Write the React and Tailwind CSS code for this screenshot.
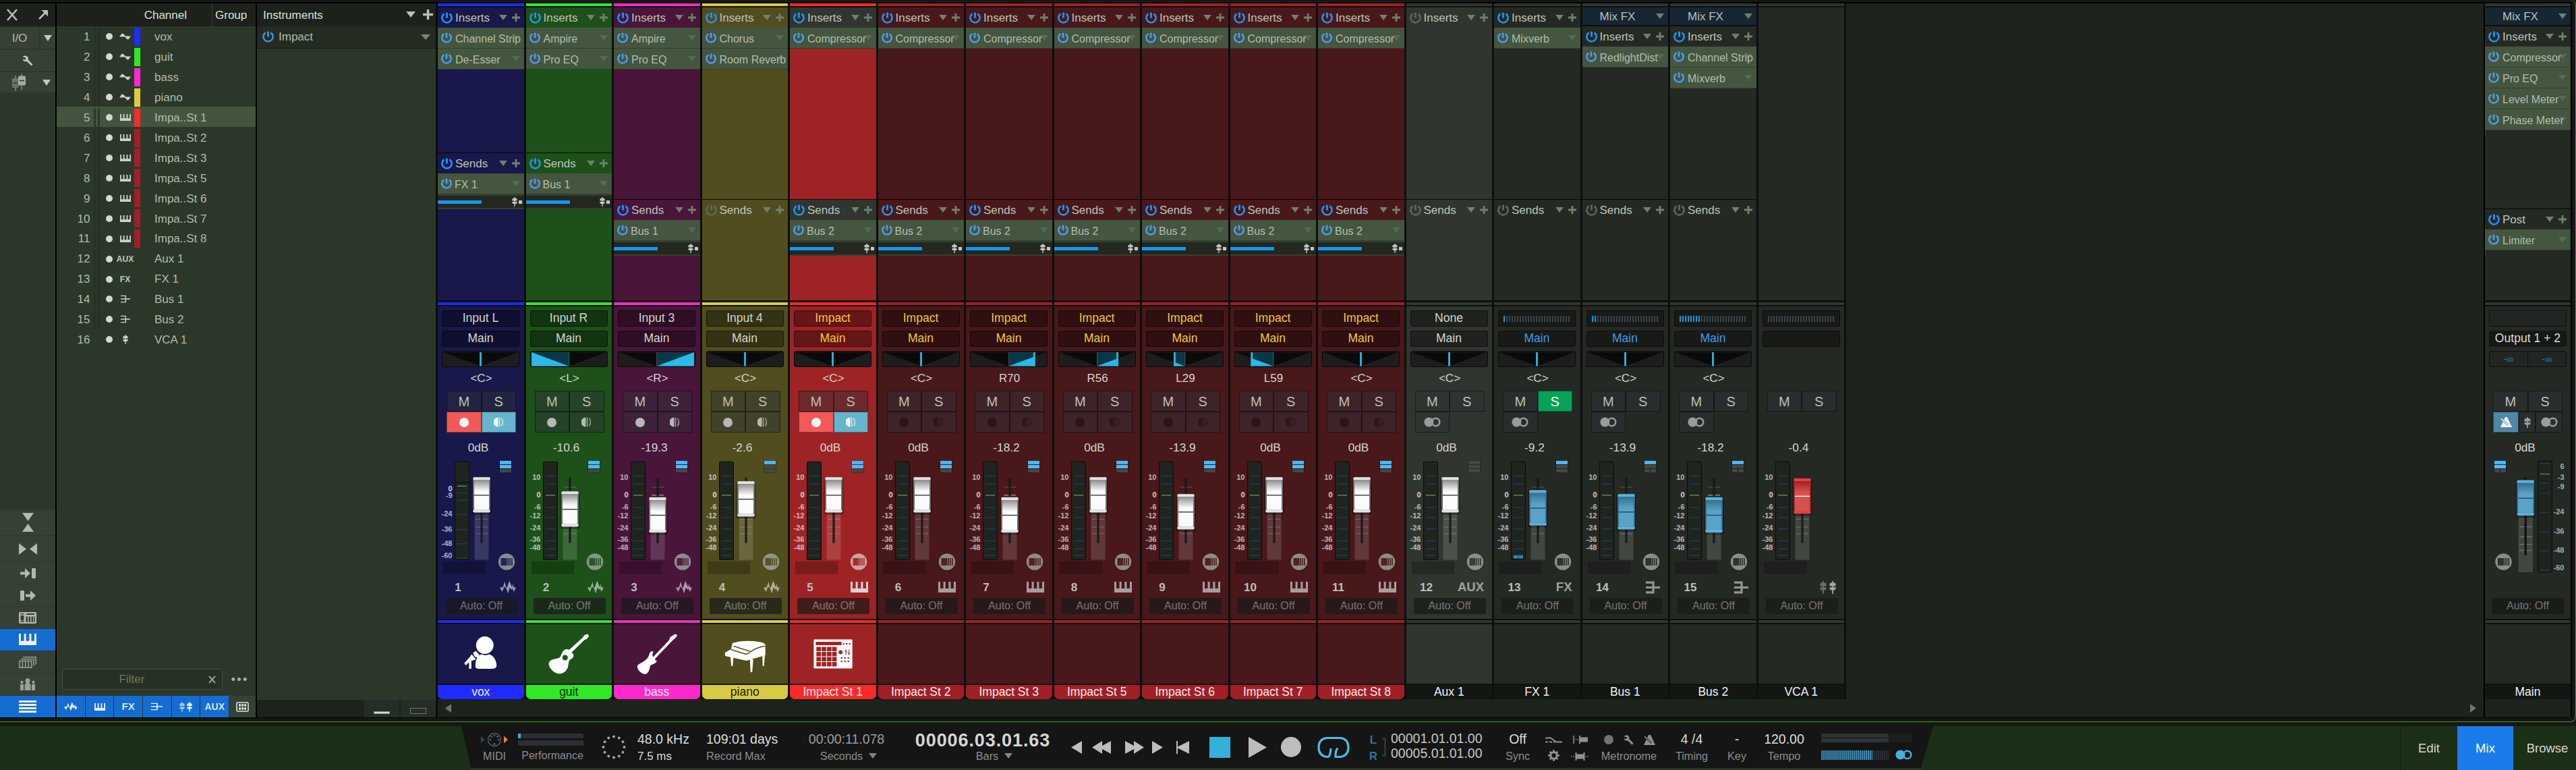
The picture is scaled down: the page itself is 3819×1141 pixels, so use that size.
import React from "react";

/* ---------- small glyphs ---------- */

function Power({ size = 17, color = "#2095f5" }) {
  return (
    <svg width={size} height={size} viewBox="0 0 17 17" className="shrink-0">
      <path d="M4.6 2.4A7.1 7.1 0 1 0 12.4 2.4" fill="none" stroke={color} strokeWidth="2.6" />
      <path d="M8.5 0.6v8" stroke={color} strokeWidth="2.8" />
    </svg>
  );
}

function Down({ w = 12, h = 8, color = "#70816d" }) {
  return (
    <svg width={w} height={h} viewBox="0 0 12 8" preserveAspectRatio="none" className="shrink-0">
      <path d="M0 0h12L6 8z" fill={color} />
    </svg>
  );
}

function Plus({ size = 12, color = "#70816d" }) {
  return (
    <svg width={size} height={size} viewBox="0 0 12 12" className="shrink-0">
      <path d="M6 0v12M0 6h12" stroke={color} strokeWidth="2.8" />
    </svg>
  );
}

function Sine() {
  return (
    <svg width="17" height="10" viewBox="0 0 17 10">
      <path d="M0 5.4C1.5 5 2.5 0.6 4.2 0.6S8 3 9.2 4.6H17C15.5 5.6 14.4 9.6 12.8 9.6S9.6 6.8 8 5.4z" fill="#ccd2ca" />
    </svg>
  );
}

function Keys({ w = 16, h = 10, color = "#ccd2ca" }) {
  return (
    <svg width={w} height={h} viewBox="0 0 26 16" preserveAspectRatio="none">
      <path
        d="M0 0h3v10h4.6V0h3v10h4.800V0h3v10H23V0h3v16H0z"
        fill={color}
      />
    </svg>
  );
}

function BusIcon({ w = 14, h = 12, color = "#ccd2ca", sw = 2 }) {
  return (
    <svg width={w} height={h} viewBox="0 0 20 18" preserveAspectRatio="none">
      <path d="M0 2h10.5v14H0M0 9h20" fill="none" stroke={color} strokeWidth={sw} />
    </svg>
  );
}

function FaderGlyph({ w = 8, h = 14, color = "#ccd2ca" }) {
  return (
    <svg width={w} height={h} viewBox="0 0 8 14" preserveAspectRatio="none">
      <path d="M4 0v14" stroke={color} strokeWidth="1.4" />
      <path d="M1.6 1.8h4.8L7.6 3v2.6H.4V3zM.4 6.9h7.2v1.8L6.4 10H1.6L.4 8.7z" fill={color} />
    </svg>
  );
}

function Wave({ w = 24, h = 20, color = "#b0b4b8" }) {
  return (
    <svg width={w} height={h} viewBox="0 0 24 20" preserveAspectRatio="none">
      <path
        d="M0 10.5h4.4L7.4 2l1.8 8.5h1.6L14.2.6l4 9.9 1-5.4 1.6 5.4H24L20.8 17l-2.4-5.6-1 2.6-2.6-3.4L12 19.4 9.4 11 7.8 11l-.8-2.4L3.4 17z"
        fill={color}
      />
    </svg>
  );
}

function Rings({ w = 25, h = 15, color = "#9a9d98" }) {
  return (
    <svg width={w} height={h} viewBox="0 0 25 15">
      <circle cx="7.4" cy="7.5" r="7" fill={color} />
      <circle cx="17.6" cy="7.5" r="5.7" fill="none" stroke={color} strokeWidth="2.4" />
    </svg>
  );
}

function Wrench({ size = 16, color = "#c0c5bd" }) {
  return (
    <svg width={size} height={size} viewBox="0 0 16 16">
      <path
        d="M.6 2.6A4.6 4.6 0 0 1 4.4.4 4.6 4.6 0 0 1 8.8 6.4L15.6 13.4 13.4 15.6 6.6 8.8A4.6 4.6 0 0 1 .4 5.8L3.4 6.4 5.4 5.4 5.2 3.4z"
        fill={color}
      />
    </svg>
  );
}

function Metronome({ w = 17, h = 15, color = "#8f918f", back = "#151515" }) {
  return (
    <svg width={w} height={h} viewBox="0 0 17 15" preserveAspectRatio="none">
      <path d="M7 0h3l7 15H0z" fill={color} />
      <path d="M1 2.4 11.5 12" stroke={back} strokeWidth="3" />
      <path d="M1 2.4 11.5 12" stroke={color} strokeWidth="1.5" />
    </svg>
  );
}

/* ---------- insert / send rack ---------- */

function RackHeader({ label, on = true, bg = "" }) {
  return (
    <div className={`flex h-[30px] items-center pr-[6px] pl-[5px] ${bg}`}>
      <Power color={on ? "#2095f5" : "#5f675c"} />
      <span className="ml-[4px] flex-1 pt-[1px] text-[17px] leading-none text-[#bdc5b8]">{label}</span>
      <Down />
      <span className="ml-[7px] flex">
        <Plus />
      </span>
    </div>
  );
}

function RackItem({ label, send }) {
  return (
    <div className="flex h-[31px] items-center border-b border-[#33402f] bg-[#44563f] pr-[6px] pl-[5px]">
      <Power size={16} color="#4f9df0" />
      <span
        className={`z-10 w-0 flex-1 pt-[3px] whitespace-nowrap text-[16px] leading-none text-[#b2beac] ${send ? "ml-[4px]" : "ml-[5px]"}`}
      >
        {label}
      </span>
      <Down color="#576a52" />
    </div>
  );
}

function SendLevel() {
  return (
    <div className="flex h-[22px] items-center border-y-2 border-[#34402f] bg-[#232720] pr-[3px]">
      <div className="h-[5px] w-[65px] bg-[#1496f5]" />
      <div className="ml-auto flex items-center gap-[2px]">
        <FaderGlyph color="#c2c8c0" />
        <div className="h-[5px] w-[5px] bg-[#c2c8c0]" />
      </div>
    </div>
  );
}

function MixFx() {
  return (
    <div className="flex h-[28px] items-center border-b-2 border-[#0b0e0b] bg-[#162733] pr-[6px] pl-[26px]">
      <span className="flex-1 text-[17px] leading-none text-[#b9c2b8]">Mix FX</span>
      <Down />
    </div>
  );
}

function Rack({ s }) {
  const headBg = s.key === "i1" ? "bg-[#30352f]" : "";
  return (
    <div className="flex h-[434px] flex-col" style={{ backgroundColor: s.bg }}>
      {!s.vca && (
        <>
          <div className={s.highSends ? "h-[215px]" : "h-[284px]"}>
            {s.mixfx && <MixFx />}
            <RackHeader label="Inserts" on={!s.insertsOff} bg={headBg} />
            {s.inserts.map((n) => (
              <RackItem key={n} label={n} />
            ))}
          </div>
          <div className="h-px bg-black/80" />
          <RackHeader label="Sends" on={!!s.send} bg={headBg} />
          {s.send && (
            <>
              <RackItem label={s.send} send />
              <SendLevel />
            </>
          )}
        </>
      )}
    </div>
  );
}

/* ---------- strip body ---------- */

function Pan({ v }) {
  const x = 57.5 + 55.5 * v;
  const side = v < 0 ? -1 : 1;
  const a = Math.abs(v);
  return (
    <svg width="115" height="24" viewBox="0 0 115 24" className="block">
      <rect x="0.5" y="0.5" width="114" height="23" rx="2.5" fill="#1d1d1d" stroke="#090a09" />
      <path d="M2 2h111L57.5 22.5z" fill="#0a0a0a" />
      {a > 0 && (
        <>
          <rect x={Math.min(57.5, x)} y="2" width={Math.abs(x - 57.5)} height="20.5" fill="#083848" />
          <path d={`M57.5 22.5L${x} ${22.5 - 20.5 * a}V22.5z`} fill="#2ab9e9" />
          <rect x="57" y="2" width="1.4" height="20.5" fill="#3a4a4c" />
        </>
      )}
      {a < 1 && <rect x={x - 1.4 - (a ? side : 0)} y="2" width="2.8" height="20.5" fill="#2ab9e9" />}
    </svg>
  );
}

function Slot({ children, color = "text-[#d3d6d0]" }) {
  return (
    <div
      className={`flex h-[24px] w-[115px] items-center justify-center rounded-[3px] border border-black/50 bg-black/35 text-[17.5px] leading-none whitespace-nowrap ${color}`}
    >
      {children}
    </div>
  );
}

function LevelTicks({ on }) {
  return (
    <svg width="99" height="9" viewBox="0 0 99 9">
      {Array.from({ length: 25 }, (_, i) => (
        <rect key={i} x={i * 4} y="0" width="2" height="9" fill={i < on ? "#1b97dc" : "#3a4448"} />
      ))}
    </svg>
  );
}

const stdLabels = [["10", 31], ["0", 57.3], ["-6", 75.3], ["-12", 88.3], ["-24", 106.2], ["-36", 123.2], ["-48", 135.2]];
const stdTicks = [29.3, 41.2, 57.8, 76, 90.6, 107.6, 125.4, 137.3, 146.8];
const voxLabels = [["0", 47.7], ["-9", 58], ["-24", 85.2], ["-36", 108.2], ["-48", 129.2], ["-60", 147.2]];
const voxTicks = [44.3, 54.6, 65.3, 86.3, 108.8, 129.8, 151];

function Cap({ x, y, kind }) {
  const c = {
    white: ["#8f8f8f", "#fbfbfb", "#e4e4e4", "#6e6e6e", "#3a3a3a"],
    blue: ["#356f8d", "#5aa3c8", "#5fb0d8", "#2f6c8c", "#24465a"],
    red: ["#a51f22", "#d65050", "#e04242", "#a02020", "#ffffff"],
  }[kind];
  const id = `cap-${kind}`;
  return (
    <g>
      <defs>
        <linearGradient id={id} x1="0" y1="0" x2="0" y2="1">
          <stop offset="0" stopColor={c[0]} />
          <stop offset="0.38" stopColor={c[1]} />
          <stop offset="1" stopColor={c[1]} />
        </linearGradient>
      </defs>
      <rect x={x - 14.5} y={y - 26} width="29" height="55" rx="4" fill="#000" opacity="0.35" />
      <rect x={x - 13} y={y - 27} width="26" height="53" rx="2.5" fill={c[3]} />
      <rect x={x - 12.5} y={y - 26.5} width="25" height="4" rx="1.5" fill={c[2]} />
      <rect x={x - 12.5} y={y + 21.5} width="25" height="4" rx="1.5" fill={c[2]} />
      <rect x={x - 11} y={y - 22.5} width="22" height="44" rx="1.5" fill={`url(#${id})`} />
      <rect x={x - 11} y={y - 0.7} width="22" height="1.4" fill={c[4]} />
    </g>
  );
}

function ScaleIcon({ x, on, split }) {
  return (
    <g>
      <rect x={x} y="6" width="19" height="19" fill="#000" opacity="0.25" />
      {[0, 1, 2].map((i) => (
        <rect key={i} x={x + 1} y={6.8 + i * 6.1} width="17" height="5.1" fill={i < on ? "#4fb9f0" : "#454745"} />
      ))}
      {split && <rect x={x + 8.7} y="19" width="1.4" height="5.2" fill="#222" />}
    </g>
  );
}

function PianoBadge({ cx, color = "#a3a7a3", bg }) {
  return (
    <g>
      <circle cx={cx} cy="156.5" r="12.2" fill={color} opacity="0.8" />
      <rect x={cx - 8.5} y="151" width="9" height="11" fill={bg} opacity="0.9" />
      <path d={`M${cx + 2.2} 151v11M${cx + 5} 151v11M${cx + 7.9} 151v11`} stroke={bg} strokeWidth="1.6" />
    </g>
  );
}

function Fader({ s }) {
  const labels = s.key === "vox" ? voxLabels : stdLabels;
  const ticks = s.key === "vox" ? voxTicks : stdTicks;
  const zero = s.key === "vox" ? 44.3 : 57.8;
  return (
    <svg width="128" height="180" viewBox="0 0 128 180" className="block">
      {labels.map(([t, y]) => (
        <text
          key={t}
          x="21.5"
          y={y + 3.9}
          textAnchor="end"
          fontSize="11"
          fontWeight="700"
          fill="#ffffff"
          opacity={t === "0" ? 0.8 : 0.65}
          fontFamily="'Liberation Sans', Arial, sans-serif"
        >
          {t}
        </text>
      ))}
      <rect x="25.5" y="8.3" width="21" height="145" rx="1.5" fill="#1f241e" stroke="#0a0d0a" />
      {s.key === "vox" && <rect x="26" y="38.6" width="20" height="1.2" fill="#0a0d0a" />}
      {ticks.map((y) => (
        <rect key={y} x="29" y={y - 0.8} width="14" height="1.6" fill={y === zero ? "#617a55" : "#1c3d55"} />
      ))}
      {s.key === "fx" && (
        <>
          <rect x="29" y="147" width="6.5" height="4.5" fill="#2f86c0" />
          <rect x="36.3" y="147" width="6.5" height="4.5" fill="#2f86c0" />
        </>
      )}
      <rect x="54.5" y={s.cap} width="21" height={153.5 - s.cap} rx="1.5" fill="#fff" opacity="0.14" />
      {[46, 57.8, 93.4, 105, 114.7].map((y, i) => (
        <rect key={y} x="56" y={y - 0.6} width="18" height="1.2" fill={i === 1 ? "#cfe0b8" : "#fff"} opacity={i === 1 ? 0.7 : 0.2} />
      ))}
      <rect x="63.3" y="31.7" width="3.4" height="97" fill="#171a18" opacity="0.9" />
      <Cap x={65} y={s.cap} kind={s.capKind || "white"} />
      {!s.vca && <ScaleIcon x={91} on={s.scale} split={s.split} />}
      <rect x="8" y="156" width="63" height="18.5" fill="#000" opacity="0.22" stroke="#000" strokeOpacity="0.3" />
      {!s.vca && <PianoBadge cx={102} bg={s.bg} color={s.key === "i1" ? "#dcc0c0" : "#a3a7a3"} />}
    </svg>
  );
}

function Monitor({ color }) {
  return (
    <svg width="15" height="15" viewBox="0 0 15 15">
      <path d="M6.5.5a7 7 0 0 0 0 14z" fill={color} />
      <path d="M8.6.8v13.4M11.4 1.6q4 5.8 0 11.6" fill="none" stroke={color} strokeWidth="1.6" opacity="0.8" />
    </svg>
  );
}

const btn = "flex items-center justify-center bg-[#2e343a]/45 border border-black/45";

function Buttons({ s }) {
  const txt = `${btn} h-[31px] text-[20px] leading-none`;
  const glyph = s.armed ? "#f4f4f4" : s.dim ? "#2a1518" : "#b5b9b3";
  return (
    <div className="ml-[13px] grid w-[103px] grid-cols-2 rounded-[3px]">
      <div className={`${txt} text-[#bcc0ba]`}>M</div>
      <div className={`${txt} ${s.solo ? "text-white" : "text-[#bcc0ba]"}`} style={s.solo ? { backgroundColor: "#05a357" } : undefined}>
        S
      </div>
      {s.rec && (
        <>
          <div className={`${btn} h-[31px]`} style={s.armed ? { backgroundColor: "#f25959" } : undefined}>
            <div className="h-[14px] w-[14px] rounded-full" style={{ backgroundColor: glyph }} />
          </div>
          <div className={`${btn} h-[31px]`} style={s.armed ? { backgroundColor: "#65b5cc" } : undefined}>
            <Monitor color={glyph} />
          </div>
        </>
      )}
      {s.rings && (
        <div className={`${btn} h-[31px]`}>
          <Rings />
        </div>
      )}
    </div>
  );
}

function TypeIcon({ s }) {
  if (s.type === "wave") return <Wave color={s.icon} />;
  if (s.type === "keys") return <Keys w={26} h={16} color={s.icon} />;
  if (s.type === "bus") return <BusIcon w={21} h={19} color="#94968f" sw={3} />;
  if (s.type === "vca")
    return (
      <span className="flex items-center gap-[4px]">
        <FaderGlyph w={10} h={19} color="#6c706a" />
        <FaderGlyph w={10} h={19} color="#a5a8a2" />
      </span>
    );
  return <span className="text-[18.5px] leading-none font-bold text-[#a0a29c]">{s.type}</span>;
}

function Body({ s }) {
  return (
    <div className="flex h-[463px] flex-col pt-[6px]" style={{ backgroundColor: s.bg }}>
      <div className="ml-[6px] flex flex-col gap-[6px]">
        <Slot color={s.yellow ? "text-[#f0c83c]" : undefined}>
          {s.ticks !== undefined ? <LevelTicks on={s.ticks} /> : s.input}
        </Slot>
        <Slot color={s.yellow ? "text-[#f0c83c]" : s.blueOut ? "text-[#3d9bea]" : undefined}>{s.vca ? "" : "Main"}</Slot>
        {s.vca ? <div className="h-[24px]" /> : <Pan v={s.pan} />}
      </div>
      <div className="flex h-[35px] w-[129px] items-center justify-center pb-[3px] text-[17px] leading-none text-[#d3d6d0]">
        {s.panLabel}
      </div>
      <div className="h-[62px]">
        <Buttons s={s} />
      </div>
      <div className="mt-[11px] flex h-[24px] w-[120px] items-center justify-center text-[17.3px] leading-none text-[#d3d6d0]">
        {s.db}
      </div>
      <Fader s={s} />
      <div className="flex h-[28px] items-center pr-[12px]">
        <span className="w-[60px] text-center text-[17px] leading-none font-bold text-[#bcc1ba]">{s.num}</span>
        <span className="ml-auto flex">
          <TypeIcon s={s} />
        </span>
      </div>
      <div className="mt-[2px] ml-[11px] flex h-[24px] w-[107px] items-center justify-center rounded-[2px] bg-[#181a18]/70 text-[16px] leading-none text-white/40">
        Auto: Off
      </div>
    </div>
  );
}

/* ---------- instrument pictures ---------- */

function Singer() {
  return (
    <svg width="128" height="88" viewBox="0 0 128 88" fill="#fff">
      <ellipse cx="70" cy="31" rx="13" ry="13" />
      <path d="M56 62C56 52 60 45 66 44.5Q71 47.5 76 44.5C84 46 88 56 87.5 62Q87 65.500 82 66H61Q56 66 56 62z" />
      <path d="M52.500 42.500l4-3 5.500 5.500-2.500 4.500q-5 0-7-7z" />
      <path d="M50.500 44.500l6.500 7.500-7 2.500V66h-3.500V56.500L41.500 61 39.500 57.500 46.500 50z" />
    </svg>
  );
}

function Guitar({ hole }) {
  return (
    <svg width="128" height="88" viewBox="0 0 128 88" fill="#fff">
      <path d="M52 46C54 38 60 35 64 38L84 20 87 16 92 14.500 93.500 18 90 22 87 23 67.500 42C71 44 72 48 68 51 62 53 64 58 62 64 59 72 51 75 45 72.500 37 69 31 60 35 55 39 50 50 53 52 46z" />
      <circle cx="58" cy="49.500" r="4" fill={hole} />
    </svg>
  );
}

function Bass() {
  return (
    <svg width="128" height="88" viewBox="0 0 128 88" fill="#fff">
      <path d="M53 44C54 40 57 39 59 41 57 44 57 46 58.500 48.500L82 24 84 19 91 14.500 94.500 16 93 19 86 25.500 61.500 51C61 54 63 53.500 64 54 63 59 56 59 54 62 53 70 50 74 46 74 40 73.500 34 66 35 62 37 57 50 56 53 44z" />
    </svg>
  );
}

function Grand({ bg }) {
  return (
    <svg width="128" height="88" viewBox="0 0 128 88" fill="#fff">
      <path d="M34 42L43 37 45 28Q58 23.500 76 25T94 31V46L66 54 34 47z" />
      <path d="M47 32.500L72 40.500Q82 34 93.500 32.500M43 37.500L65 44.500 71 42" fill="none" stroke={bg} strokeWidth="1.500" />
      <path d="M42 48h4.500L45.500 62h-2zM71 52h5L74.500 71h-2.500zM89.500 44h4L92 62h-2z" />
    </svg>
  );
}

function DrumMachine({ bg }) {
  return (
    <svg width="128" height="88" viewBox="0 0 128 88">
      <rect x="35.500" y="22.500" width="57.500" height="43" rx="1" fill="#fff" />
      <rect x="38.500" y="26" width="38.500" height="5" fill={bg} />
      {[0, 1, 2, 3].map((r) =>
        [0, 1, 2, 3].map((c) => (
          <rect key={`${r}${c}`} x={39.500 + c * 7.800} y={33.500 + r * 7.500} width="6.800" height="6.500" fill={bg} />
        )),
      )}
      <circle cx="75.500" cy="41.500" r="3" fill={bg} />
      <path d="M83.500 37.500v8M88 37.500v8M82 40h3M86.500 43.500h3" stroke={bg} strokeWidth="1.200" />
      {[80, 84.500, 89].map((x) => (
        <circle key={x} cx={x} cy="29" r="1.300" fill={bg} />
      ))}
      {[77, 82, 87].map((x) => (
        <g key={x} fill={bg}>
          <circle cx={x} cy="50" r="1.300" />
          <circle cx={x} cy="55" r="1.300" />
        </g>
      ))}
    </svg>
  );
}

/* ---------- strip data ---------- */

const red = {
  bar: "#a31e25", bg: "#49181a", rec: true, dim: true, yellow: true, input: "Impact",
  inserts: ["Compressor"], send: "Bus 2", type: "keys", icon: "#a99c9c", scale: 2,
};
const grey = { bar: "#30352f", bg: "#252924", rings: true, pan: 0, panLabel: "<C>", blueOut: true, capKind: "blue", dark: true };

const strips = [
  { key: "vox", name: "vox", num: "1", bar: "#1f2bff", bg: "#18184a", inserts: ["Channel Strip", "De-Esser"], highSends: true, send: "FX 1", input: "Input L", pan: 0, panLabel: "<C>", rec: true, armed: true, db: "0dB", cap: 57.8, scale: 2, type: "wave", icon: "#9c9cb4", pic: <Singer /> },
  { key: "gtr", name: "guit", num: "2", bar: "#30e825", bg: "#1d5119", inserts: ["Ampire", "Pro EQ"], highSends: true, send: "Bus 1", input: "Input R", pan: -1, panLabel: "<L>", rec: true, db: "-10.6", cap: 78.7, scale: 2, type: "wave", icon: "#98b096", pic: <Guitar hole="#1d5119" />, ink: "#0e2b0c" },
  { key: "bas", name: "bass", num: "3", bar: "#ff28cb", bg: "#491539", inserts: ["Ampire", "Pro EQ"], send: "Bus 1", input: "Input 3", pan: 1, panLabel: "<R>", rec: true, db: "-19.3", cap: 87.5, scale: 2, type: "wave", icon: "#ad98a8", pic: <Bass /> },
  { key: "pno", name: "piano", num: "4", bar: "#d9cc42", bg: "#524d1e", inserts: ["Chorus", "Room Reverb"], input: "Input 4", pan: 0, panLabel: "<C>", rec: true, db: "-2.6", cap: 63.7, scale: 1, type: "wave", icon: "#afac96", pic: <Grand bg="#524d1e" />, ink: "#1c1a08" },
  { ...red, key: "i1", name: "Impact St 1", num: "5", bar: "#ff2828", bg: "#9e2324", pan: 0, panLabel: "<C>", armed: true, dim: false, db: "0dB", cap: 57.8, icon: "#dcd0d0", pic: <DrumMachine bg="#9e2324" /> },
  { ...red, key: "i2", name: "Impact St 2", num: "6", pan: 0, panLabel: "<C>", db: "0dB", cap: 57.8 },
  { ...red, key: "i3", name: "Impact St 3", num: "7", pan: 0.7, panLabel: "R70", db: "-18.2", cap: 87.5 },
  { ...red, key: "i5", name: "Impact St 5", num: "8", pan: 0.56, panLabel: "R56", db: "0dB", cap: 57.8 },
  { ...red, key: "i6", name: "Impact St 6", num: "9", pan: -0.29, panLabel: "L29", db: "-13.9", cap: 82.7 },
  { ...red, key: "i7", name: "Impact St 7", num: "10", pan: -0.59, panLabel: "L59", db: "0dB", cap: 57.8 },
  { ...red, key: "i8", name: "Impact St 8", num: "11", pan: 0, panLabel: "<C>", db: "0dB", cap: 57.8 },
  { ...grey, key: "aux", name: "Aux 1", num: "12", bg: "#30352f", inserts: [], insertsOff: true, input: "None", blueOut: false, capKind: "white", db: "0dB", cap: 57.8, scale: 0, type: "AUX" },
  { ...grey, key: "fx", name: "FX 1", num: "13", inserts: ["Mixverb"], ticks: 1, solo: true, db: "-9.2", cap: 77, scale: 1, type: "FX" },
  { ...grey, key: "b1", name: "Bus 1", num: "14", mixfx: true, inserts: ["RedlightDist"], ticks: 2, db: "-13.9", cap: 82.7, scale: 1, split: true, type: "bus" },
  { ...grey, key: "b2", name: "Bus 2", num: "15", mixfx: true, inserts: ["Channel Strip", "Mixverb"], ticks: 8, db: "-18.2", cap: 87.5, scale: 1, split: true, type: "bus" },
  { ...grey, key: "vca", name: "VCA 1", num: "", vca: true, rings: false, inserts: [], ticks: 0, panLabel: "", db: "-0.4", cap: 59.4, capKind: "red", type: "vca" },
];

function ColorBar({ color, top }) {
  return (
    <div className={`border-b-2 border-[#0d100d] ${top ? "h-[6px]" : "h-[9px] border-t-[3px]"}`} style={{ backgroundColor: color }} />
  );
}

function NameTag({ name, color, ink, dark }) {
  return (
    <div
      className={`flex h-[23px] items-center justify-center border-t-2 border-[#10120f] text-[17.5px] leading-none ${dark ? "" : "rounded-b-[7px]"}`}
      style={{ backgroundColor: dark ? "#141614" : color, color: ink || "#f0f0f0" }}
    >
      {name}
    </div>
  );
}

function Strip({ s }) {
  return (
    <div className="flex w-[130.5px] shrink-0 flex-col border-r-[3px] border-[#0c0f0c] bg-[#0c0f0c]">
      <ColorBar color={s.bar} top />
      <Rack s={s} />
      <ColorBar color={s.bar} />
      <Body s={s} />
      <div className="h-[8px] border-y-2 border-[#0d100d]" style={{ backgroundColor: s.bar }} />
      <div className="flex h-[88px] justify-center" style={{ backgroundColor: s.bg }}>
        {s.pic}
      </div>
      <NameTag name={s.name} color={s.bar} ink={s.ink} dark={s.dark} />
    </div>
  );
}

/* ---------- main output strip ---------- */

const mainLabels = [["6", 14.7], ["-3", 30.7], ["-9", 45], ["-24", 81.6], ["-36", 110.8], ["-48", 139], ["-60", 164.6]];
const mainTicks = [11, 26.5, 40, 55, 83.5, 112.5, 140.5, 169];

function MainStrip() {
  return (
    <div className="flex w-[127px] flex-col bg-[#252924]">
      <ColorBar color="#30352f" top />
      <div className="h-[434px]">
        <div className="h-[298px]">
          <MixFx />
          <RackHeader label="Inserts" />
          <RackItem label="Compressor" />
          <RackItem label="Pro EQ" />
          <RackItem label="Level Meter" />
          <RackItem label="Phase Meter" />
        </div>
        <div className="h-px bg-black/80" />
        <RackHeader label="Post" />
        <RackItem label="Limiter" />
      </div>
      <ColorBar color="#30352f" />
      <div className="flex h-[463px] flex-col pt-[5px]">
        <div className="ml-[6px] flex flex-col gap-[6px]">
          <div className="h-[25px] w-[115px] rounded-[3px] border border-[#10120f] bg-[#222622]" />
          <div className="flex h-[24px] w-[115px] items-center justify-center rounded-[3px] bg-[#161816] text-[17.6px] leading-none whitespace-nowrap text-[#dadcd8]">
            Output 1 + 2
          </div>
          <div className="grid h-[24px] w-[115px] grid-cols-2 rounded-[3px] border border-[#0d0f0d] bg-[#222622] text-[14px] leading-none text-[#2f78b0]">
            <span className="flex items-center justify-center border-r border-[#0d0f0d]">-∞</span>
            <span className="flex items-center justify-center">-∞</span>
          </div>
        </div>
        <div className="mt-[35px] ml-[12px] grid h-[62px] w-[103px] grid-cols-2 grid-rows-2 text-[20px] leading-none text-[#bcc0ba]">
          <div className={btn}>M</div>
          <div className={btn}>S</div>
          <div className="col-span-2 grid grid-cols-[38px_25px_40px]">
            <div className="flex items-center justify-center border border-black/50 bg-[#5088a4]">
              <Metronome color="#f0f4f6" back="#5088a4" />
            </div>
            <div className={btn}>
              <FaderGlyph w={10} h={16} color="#9a9d98" />
            </div>
            <div className={btn}>
              <Rings />
            </div>
          </div>
        </div>
        <div className="mt-[11px] flex h-[24px] w-[119px] items-center justify-center text-[17.3px] leading-none text-[#dadcd8]">0dB</div>
        <svg width="127" height="180" viewBox="0 0 127 180" className="block">
          <ScaleIcon x={13} on={2} split />
          <PianoBadge cx={27.5} bg="#252924" />
          <rect x="49.500" y="80" width="21.500" height="92" rx="1.500" fill="#fff" opacity="0.14" />
          {[104, 119, 130, 139].map((y) => (
            <rect key={y} x="51" y={y} width="18.500" height="1.200" fill="#fff" opacity="0.25" />
          ))}
          <rect x="58.500" y="31" width="3.400" height="116" fill="#121412" />
          <Cap x={60.2} y={62.3} kind="blue" />
          <rect x="78.500" y="7" width="21" height="165" rx="1.500" fill="#1f241e" stroke="#0a0d0a" />
          {mainTicks.map((y) => (
            <rect key={y} x="82" y={y - 0.8} width="14" height="1.500" fill={y === 26.5 ? "#617a55" : "#1c3d55"} />
          ))}
          {mainLabels.map(([t, y]) => (
            <text key={t} x="117.500" y={y + 3.9} textAnchor="end" fontSize="11" fontWeight="700" fill="#a9ada8" fontFamily="'Liberation Sans', Arial, sans-serif">
              {t}
            </text>
          ))}
        </svg>
        <div className="mt-[30px] ml-[10px] flex h-[24px] w-[107px] items-center justify-center rounded-[2px] bg-[#1a1c1a] text-[16px] leading-none text-white/40">
          Auto: Off
        </div>
      </div>
      <div className="h-[8px] border-y-2 border-[#0d100d] bg-[#30352f]" />
      <div className="h-[88px]" />
      <NameTag name="Main" dark />
      <div className="h-[27px] bg-[#1b231b]" />
    </div>
  );
}

/* ---------- left panels ---------- */

function Rail() {
  const cell = "flex items-center justify-center bg-[#374035]";
  const c = "#b3b9b0";
  return (
    <div className="flex w-[82px] flex-col bg-[#2b3829]">
      <div className="flex h-[33.5px] items-center justify-between bg-[#1c211b] px-[10px]">
        <svg width="16" height="18" viewBox="0 0 16 18"><path d="M1 1l14 16M15 1L1 17" stroke="#b9c0b5" strokeWidth="2.600" /></svg>
        <svg width="15" height="15" viewBox="0 0 15 15"><path d="M1 14L11 4" stroke="#b9c0b5" strokeWidth="2.600" /><path d="M4.500 1H14v9.500z" fill="#b9c0b5" /></svg>
      </div>
      <div className="mt-[2.5px] flex h-[31px] gap-[2px]">
        <div className={`${cell} w-[58px] text-[17px] text-[#b2bbad]`}>I/O</div>
        <div className={`${cell} flex-1`}><Down h={9} color="#c3cabf" /></div>
      </div>
      <div className={`${cell} mt-[2px] h-[31px]`}><Wrench /></div>
      <div className="mt-[2px] flex h-[30px] items-center bg-[#374035] pr-[7px] pl-[18px]">
        <svg width="20" height="26" viewBox="0 0 20 26">
          <path d="M5 3v23M14 0v24" stroke="#848b81" strokeWidth="1.500" />
          <rect x="0" y="7" width="10" height="14" rx="2" fill="#6c7469" />
          <rect x="9" y="3.500" width="11" height="14" rx="2" fill="#a6aca3" />
          <path d="M2 14h6M11 10.500h7" stroke="#2c332b" strokeWidth="1.500" />
        </svg>
        <span className="ml-auto flex"><Down h={9} color="#c3cabf" /></span>
      </div>
      <div className="flex-1" />
      <div className="flex flex-col gap-px">
        <div className={`${cell} h-[38px]`}>
          <svg width="17" height="28" viewBox="0 0 17 28"><path d="M0 0h17L8.500 12zM0 28h17L8.500 16z" fill={c} /></svg>
        </div>
        <div className={`${cell} h-[38px]`}>
          <svg width="27" height="17" viewBox="0 0 27 17"><path d="M0 0v17l11-8.500zM27 0v17L16 8.500z" fill={c} /></svg>
        </div>
        <div className={`${cell} h-[32px]`}>
          <svg width="23" height="15" viewBox="0 0 23 15"><path d="M0 5.500h7V0l8 7.500-8 7.500V9.500H0z" fill={c} /><rect x="17" width="6" height="15" rx="1" fill={c} /></svg>
        </div>
        <div className={`${cell} h-[32px]`}>
          <svg width="23" height="15" viewBox="0 0 23 15"><path d="M8 5.500h7V0l8 7.500-8 7.500V9.500H8z" fill={c} /><rect width="6" height="15" rx="1" fill={c} /></svg>
        </div>
        <div className={`${cell} h-[32px]`}>
          <svg width="26" height="17" viewBox="0 0 26 17">
            <rect width="26" height="17" rx="1.500" fill={c} />
            <path d="M2.500 5h5v7.500h-5zM2.500 2h5v1.500h-5zM2.500 13.500h5V15h-5zM11 2h12v2H11zM10.500 6.500h2.500V15h-2.500zM14.500 6.500H17V15h-2.500zM18.500 6.500H21V15h-2.500zM22.200 6.500H23.800V15h-1.600z" fill="#374035" />
          </svg>
        </div>
        <div className="flex h-[32px] items-center justify-center bg-[#156dd1] pb-[2px]"><Keys w={26} h={17} color="#eef1f4" /></div>
        <div className={`${cell} h-[32px]`}>
          <svg width="26" height="17" viewBox="0 0 26 17" fill="none" stroke="#9aa196" strokeWidth="1.500">
            <path d="M.8 6.500h18v9.700H.8zM5.300 6.500v9.700M9.800 6.500v9.700M14.300 6.500v9.700M3 3.800h19v10M6 .8h19.200v11" />
          </svg>
        </div>
        <div className={`${cell} h-[32px]`}>
          <svg width="22" height="18" viewBox="0 0 22 18" fill="#9aa196">
            <circle cx="2.500" cy="6" r="2.200" /><circle cx="19.500" cy="6" r="2.200" /><circle cx="11" cy="3.500" r="3.500" />
            <path d="M0 9h5v9H0zM17 9h5v9h-5zM6.500 10l2-3.500h5l2 3.500v8h-9z" />
          </svg>
        </div>
        <div className="flex h-[32px] items-center justify-center bg-[#156dd1]">
          <svg width="26" height="18" viewBox="0 0 26 18"><path d="M0 1.500h26M0 6.500h26M0 11.500h26M0 16.500h26" stroke="#eef1f4" strokeWidth="3" /></svg>
        </div>
      </div>
    </div>
  );
}

const channels = [
  ["vox", "#1f2bff", "sine"], ["guit", "#30e825", "sine"], ["bass", "#ff28cb", "sine"], ["piano", "#d9cc42", "sine"],
  ["Impa..St 1", "#ff2828", "keys"], ["Impa..St 2", "#a31e25", "keys"], ["Impa..St 3", "#a31e25", "keys"], ["Impa..St 5", "#a31e25", "keys"],
  ["Impa..St 6", "#a31e25", "keys"], ["Impa..St 7", "#a31e25", "keys"], ["Impa..St 8", "#a31e25", "keys"],
  ["Aux 1", null, "AUX"], ["FX 1", null, "FX"], ["Bus 1", null, "bus"], ["Bus 2", null, "bus"], ["VCA 1", null, "vca"],
];

function ChannelIcon({ t }) {
  if (t === "sine") return <Sine />;
  if (t === "keys") return <Keys />;
  if (t === "bus") return <BusIcon />;
  if (t === "vca") return <FaderGlyph />;
  return <span className="text-[12px] leading-none font-bold text-[#c3cabf]">{t}</span>;
}

function ChannelList() {
  const b = "flex h-[32px] flex-1 items-center justify-center bg-[#156dd1]";
  return (
    <div className="flex w-[295px] flex-col bg-[#2b3829]">
      <div className="flex h-[33.5px] items-center bg-[#1c211b] text-[17px] text-[#dde1db]">
        <span className="flex h-full w-[231px] items-center justify-end border-r border-[#3a4238] pt-[1px] pr-[37px]">Channel</span>
        <span className="pt-[1px] pl-[4px]">Group</span>
      </div>
      {channels.map(([name, color, t], i) => (
        <div key={name} className={`flex h-[29.93px] items-center pt-[2px] ${i === 4 ? "bg-[#43553e]" : ""}`}>
          <span className="w-[49.500px] pt-[1px] text-right text-[17px] text-[#b2bbad]">{i + 1}</span>
          {name === "VCA 1" ? (
            <span className="ml-[5px] w-[9px]" />
          ) : (
            <span className="ml-[5px] flex h-[27px] w-[9px] justify-between">
              <span className={i === 4 ? "w-[3px] bg-[#2b3829]" : "w-[3px] bg-[#263124]"} />
              <span className={i === 4 ? "w-[3px] bg-[#2b3829]" : "w-[3px] bg-[#263124]"} />
            </span>
          )}
          <span className="ml-[9px] h-[10px] w-[10px] rounded-full bg-[#d5d9d3]" />
          <span className="ml-[4px] flex w-[30px] items-center justify-center">
            <ChannelIcon t={t} />
          </span>
          <span className="-ml-[1.5px] h-[27px] w-[9px]" style={{ backgroundColor: color || "transparent" }} />
          <span className="ml-[21px] pt-[1px] text-[17px] text-[#b2bbad]">{name}</span>
        </div>
      ))}
      <div className="flex-1" />
      <div className="mb-[9px] flex items-center">
        <div className="ml-[8px] flex h-[31px] w-[238px] items-center rounded-[4px] border border-[#47513f] bg-[#263024] pr-[9px]">
          <span className="flex-1 pr-[11px] text-center text-[17px] text-[#6b7a65]">Filter</span>
          <svg width="11" height="12" viewBox="0 0 11 12"><path d="M1 1l9 10M10 1L1 11" stroke="#98a092" strokeWidth="2" /></svg>
        </div>
        <svg width="24" height="5" viewBox="0 0 24 5" className="ml-[13px]">
          <circle cx="2.800" cy="2.500" r="2.500" fill="#aab1a5" /><circle cx="11.500" cy="2.500" r="2.500" fill="#aab1a5" /><circle cx="20.200" cy="2.500" r="2.500" fill="#aab1a5" />
        </svg>
      </div>
      <div className="flex gap-px">
        <div className={b}><Wave w={20} h={14} color="#e6eef6" /></div>
        <div className={b}><Keys w={16} h={11} color="#e6eef6" /></div>
        <div className={`${b} text-[15px] font-bold text-[#d8e4f0]`}>FX</div>
        <div className={b}><BusIcon w={17} h={12} color="#e6eef6" /></div>
        <div className={`${b} gap-[3px]`}><FaderGlyph h={15} color="#9cc4ee" /><FaderGlyph h={15} color="#e6eef6" /></div>
        <div className={`${b} text-[14px] font-bold text-[#d8e4f0]`}>AUX</div>
        <div className="flex h-[32px] w-[39px] items-center justify-center bg-[#374035]">
          <svg width="19" height="15" viewBox="0 0 19 15">
            <rect x="1" y="1" width="17" height="13" rx="1.500" fill="none" stroke="#dfe3dc" strokeWidth="1.600" />
            <path d="M4 5h3M8 5h3M12 5h3M4 10h3M8 10h3M12 10h3" stroke="#dfe3dc" strokeWidth="3.500" />
          </svg>
        </div>
      </div>
    </div>
  );
}

function Instruments() {
  return (
    <div className="flex w-[265px] flex-col bg-[#2b3829]">
      <div className="flex h-[33.500px] items-center bg-[#1c211b] pr-[4px] pl-[9px] text-[17px] text-[#dde1db]">
        <span className="flex-1 pt-[1px]">Instruments</span>
        <Down w={14} h={9} color="#b9c0b5" />
        <span className="ml-[11px] flex"><Plus size={15} color="#b9c0b5" /></span>
      </div>
      <div className="flex h-[33px] items-center border-b border-[#141a13] bg-[#242c22] pr-[8px] pl-[8px] text-[17px] text-[#b2bbad]">
        <Power color="#3a93e0" />
        <span className="ml-[7px] flex-1 pt-[1px]">Impact</span>
        <Down w={14} color="#7c8678" />
      </div>
      <div className="flex-1" />
      <div className="flex h-[26px] justify-end gap-[2px] bg-[#1b231b]">
        <div className="flex w-[52px] items-end justify-center bg-[#252d27] pb-[5px]">
          <div className="h-[4px] w-[24px] border border-[#8b9187] bg-[#d5d9d3]" />
        </div>
        <div className="flex w-[52px] items-end justify-center bg-[#252d27] pb-[5px]">
          <div className="h-[9px] w-[24px] border border-[#6f776c]" />
        </div>
      </div>
    </div>
  );
}

/* ---------- transport ---------- */

function Two({ top, bottom, cls, topCls = "text-[19.5px] text-[#dcdedc]", bottomCls = "text-[16.3px] text-[#8c8e8c]", align = "items-center" }) {
  return (
    <div className={`flex shrink-0 flex-col pt-[8px] whitespace-nowrap ${align} ${cls}`}>
      <div className={`flex h-[24px] items-center leading-none ${topCls}`}>{top}</div>
      <div className={`flex h-[25px] items-center leading-none ${bottomCls}`}>{bottom}</div>
    </div>
  );
}

function Shape({ w, h = 19, d, cls, fill = "#bdbdbd" }) {
  return (
    <svg width={w} height={h} viewBox={`0 0 ${w} ${h}`} className={`shrink-0 self-center ${cls}`}>
      <path d={d} fill={fill} />
    </svg>
  );
}

function Gear() {
  return (
    <svg width="17" height="17" viewBox="0 0 17 17">
      <circle cx="8.500" cy="8.500" r="4.700" fill="none" stroke="#8f918f" strokeWidth="3" />
      {[0, 45, 90, 135, 180, 225, 270, 315].map((a) => (
        <rect key={a} x="7" y="0.300" width="3" height="3.200" fill="#8f918f" transform={`rotate(${a} 8.5 8.5)`} />
      ))}
    </svg>
  );
}

function Transport() {
  return (
    <div className="h-[65px] w-[2182px] bg-[#2a3328] [clip-path:polygon(0_0,100%_0,2163px_100%,15px_100%)]">
      <div className="flex h-[62px] bg-[#151515]">
        <Two
          cls="ml-[24px] w-[50px]"
          bottomCls="text-[16px] text-[#8c8e8c]"
          top={
            <svg width="42" height="22" viewBox="0 0 42 22">
              <path d="M1 6l6 5-6 5z" fill="#33424a" />
              <path d="M35 5.500l6 5.500-6 5.500z" fill="#ff7a2a" />
              <circle cx="21" cy="11" r="9.500" fill="none" stroke="#4d5a62" strokeWidth="1.600" />
              {[[15, 11], [16.500, 6.500], [21, 4.800], [25.500, 6.500], [27, 11]].map(([x, y]) => (
                <circle key={x} cx={x} cy={y} r="1.500" fill="#4d5a62" />
              ))}
              <rect x="19.500" y="16" width="3" height="3" fill="#4d5a62" />
            </svg>
          }
          bottom="MIDI"
        />
        <div className="ml-[10px] flex w-[102px] shrink-0 flex-col pt-[11px]">
          <div className="flex h-[7px] w-[97px] bg-[#2b2f33]"><div className="w-[4px] bg-[#4ea6d0]" /></div>
          <div className="mt-[3px] h-[8px] w-[97px] bg-[#2b2f33]" />
          <div className="mt-[3px] flex h-[24px] items-center justify-center text-[16px] leading-none text-[#8c8e8c]">Performance</div>
        </div>
        <svg width="36" height="36" viewBox="0 0 36 36" className="ml-[22px] shrink-0 self-center">
          {Array.from({ length: 12 }, (_, i) => (
            <circle key={i} cx={18 + 15.500 * Math.sin((i * Math.PI) / 6)} cy={18 - 15.500 * Math.cos((i * Math.PI) / 6)} r="2" fill="#a3a3a3" />
          ))}
        </svg>
        <Two cls="ml-[17px] w-[85px]" align="items-start" top="48.0 kHz" bottom="7.5 ms" bottomCls="text-[17px] text-[#dcdedc]" />
        <Two cls="ml-[17px] w-[113px]" align="items-start" top="109:01 days" bottom="Record Max" />
        <Two
          cls="ml-[34px] w-[122px]"
          top="00:00:11.078"
          topCls="text-[19.500px] text-[#9c9e9c]"
          bottom={<span className="flex items-center gap-[9px] pl-[6px]">Seconds<Down color="#838583" /></span>}
        />
        <Two
          cls="ml-[31px] w-[220px]"
          top="00006.03.01.63"
          topCls="pt-[2px] text-[27px] font-bold tracking-[0.9px] text-[#d6d6d6]"
          bottom={<span className="flex items-center gap-[9px] pl-[34px]">Bars<Down color="#838583" /></span>}
        />
        <Shape cls="ml-[21px]" w={16} d="M16 0v19L0 9.500z" />
        <Shape cls="ml-[15px]" w={28} d="M15 0v7L28 0v19L15 12v7L0 9.500z" />
        <Shape cls="ml-[21px]" w={28} d="M13 0v7L0 0v19l13-7v7l15-9.500z" />
        <Shape cls="ml-[12px]" w={16} d="M0 0v19l16-9.500z" />
        <Shape cls="ml-[20px]" w={19} d="M0 0h2v8.500L19 0v19L2 10.500V19H0z" />
        <Shape cls="ml-[30px]" w={31} h={31} d="M0 0h31v31H0z" fill="#33b1da" />
        <Shape cls="ml-[27px]" w={27} h={31} d="M0 0l27 15.500L0 31z" />
        <Shape cls="ml-[21px]" w={30} h={30} d="M15 0a15 15 0 0 1 0 30a15 15 0 0 1 0-30" />
        <svg width="48" height="33" viewBox="0 0 48 33" className="ml-[24px] shrink-0 self-center">
          <path d="M17 30.500H14Q2 29 2 16.500T14 2.500H34Q46 4 46 16.500T34 30.500H27V27Q27 22 30 17.500M17 30.500Q19.500 26 20 18" fill="none" stroke="#49bbe6" strokeWidth="3.200" />
        </svg>
        <Two cls="ml-[29px] w-[12px]" top="L" bottom="R" topCls="text-[17px] text-[#32749c] font-bold" bottomCls="text-[17px] text-[#32749c] font-bold" />
        <svg width="6" height="28" viewBox="0 0 6 28" className="ml-[7px] shrink-0 self-center">
          <path d="M0 1.500h4.500v25H0" fill="none" stroke="#36393a" strokeWidth="2.500" />
        </svg>
        <div className="ml-[7px] flex w-[140px] shrink-0 flex-col pt-[7px] text-[19.500px] leading-[22px] text-[#c6c8c6]">
          <span>00001.01.01.00</span>
          <span>00005.01.01.00</span>
        </div>
        <Two cls="ml-[18px] w-[60px]" top="Off" bottom="Sync" />
        <Two
          cls="ml-[11px] w-[25px]"
          top={<svg width="25" height="11" viewBox="0 0 25 11"><path d="M0 2.500h8l8 6h9" fill="none" stroke="#8f918f" strokeWidth="2" /><path d="M0 8.500h14" stroke="#8f918f" strokeWidth="2" strokeDasharray="4 2" /></svg>}
          bottom={<span className="flex pb-[2px]"><Gear /></span>}
        />
        <Two
          cls="ml-[13px] w-[27px]"
          top={<svg width="22" height="14" viewBox="0 0 22 14"><path d="M1 1v12" stroke="#8f918f" strokeWidth="1.500" /><path d="M3.500 7h6" stroke="#8f918f" strokeWidth="1.500" strokeDasharray="1.500 1.500" /><path d="M10 1v12" stroke="#8f918f" strokeWidth="2" /><rect x="11" y="3.500" width="11" height="7" fill="#8f918f" /></svg>}
          bottom={<svg width="27" height="14" viewBox="0 0 27 14"><path d="M0 7h27" stroke="#8f918f" strokeWidth="1.500" strokeDasharray="1.500 1.500" /><path d="M7.500 1v12M19.500 1v12" stroke="#8f918f" strokeWidth="2" /><rect x="7.500" y="3.500" width="12" height="7" fill="#8f918f" /></svg>}
        />
        <Two
          cls="ml-[9px] w-[100px]"
          top={<span className="flex items-center gap-[15px] pl-[1px]"><span className="h-[14px] w-[14px] rounded-full bg-[#6c7673]" /><Wrench size={15} color="#8f918f" /><Metronome /></span>}
          bottom="Metronome"
        />
        <Two cls="ml-[12px] w-[62px]" top="4 /4" bottom="Timing" />
        <Two cls="ml-[16px] w-[40px]" top="-" bottom="Key" />
        <Two cls="ml-[10px] w-[80px]" top="120.00" bottom="Tempo" />
        <div className="ml-[15px] flex w-[135px] shrink-0 flex-col pt-[11px]">
          <div className="flex">
            <div className="flex w-[100px] flex-col gap-px"><div className="h-[6px] bg-[#2e3337]" /><div className="h-[6px] bg-[#2e3337]" /></div>
            <div className="ml-px flex-1 bg-[#1c201b]" />
          </div>
          <div className="mt-[11px] flex items-center">
            <div className="h-[14px] w-[76px] bg-[repeating-linear-gradient(90deg,#3f86aa_0_2px,#1f3440_2px_3px)]" />
            <div className="h-[14px] w-[24px] bg-[repeating-linear-gradient(90deg,#1c2226_0_2px,#2c343a_2px_3px)]" />
            <div className="flex flex-1 justify-end"><Rings w={25} h={15} color="#45b0da" /></div>
          </div>
        </div>
      </div>
    </div>
  );
}

export default function App() {
  return (
    <div className="flex h-[1141px] w-[3819px] flex-col overflow-hidden bg-[#161816] font-['Liberation_Sans',Arial,sans-serif]">
      <div className="h-[1070px] shrink-0 rounded-r-[8px] border-r border-b border-[#3f9a1f] bg-[#161816] pt-[3px]">
        <div className="flex h-[1061px] w-[3813px] rounded-br-[5px] border-t-2 border-r-2 border-b border-black bg-black">
          <Rail />
          <div className="w-[2px]" />
          <ChannelList />
          <div className="w-[2px]" />
          <Instruments />
          <div className="w-[3px] bg-[#0a0d0a]" />
          <div className="flex w-[3033px] flex-col bg-[#1b231b]">
            <div className="flex h-[1031px]">
              {strips.map((s) => (
                <Strip key={s.key} s={s} />
              ))}
            </div>
            <div className="flex h-[27px] items-center justify-between px-[11px]">
              <svg width="9" height="13" viewBox="0 0 9 13"><path d="M9 0v13L0 6.500z" fill="#6f756d" /></svg>
              <svg width="9" height="13" viewBox="0 0 9 13"><path d="M0 0v13l9-6.500z" fill="#6f756d" /></svg>
            </div>
          </div>
          <div className="w-[2px]" />
          <MainStrip />
        </div>
      </div>
      <div className="h-[6px] shrink-0 bg-[#161816]" />
      <div className="flex h-[65px] bg-[#1c2f17]">
        <div className="w-[684px]" />
        <Transport />
        <div className="ml-auto flex text-[18.5px] text-[#d4d8d2]">
          <div className="flex w-[85px] items-center justify-center border-l border-[#142210]">Edit</div>
          <div className="flex w-[83px] items-center justify-center bg-[#1b7bea] text-white">Mix</div>
          <div className="flex w-[93px] items-center justify-center pl-[8px]">Browse</div>
        </div>
      </div>
    </div>
  );
}
